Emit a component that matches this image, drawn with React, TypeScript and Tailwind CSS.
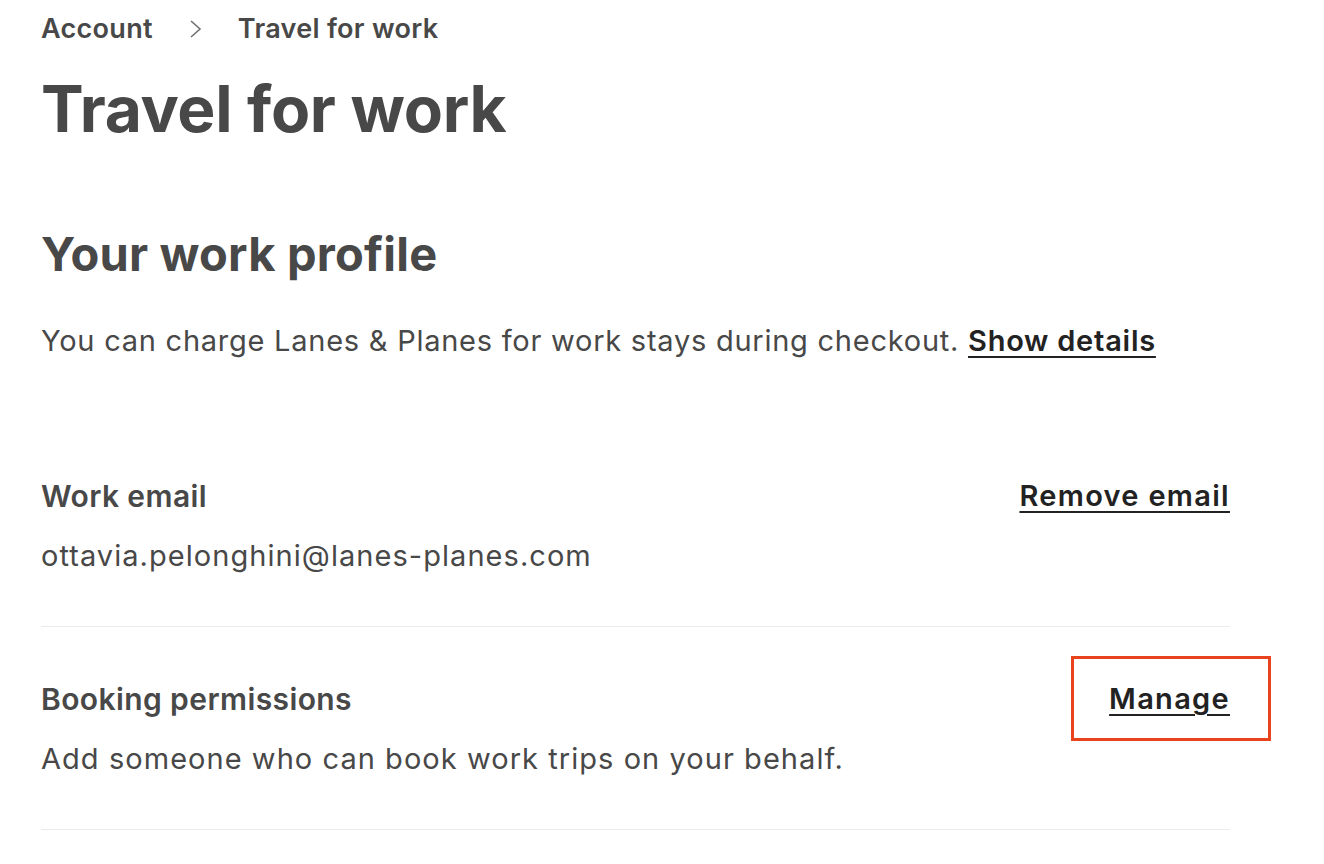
import React from 'react';

function Row({
  title,
  body,
  action,
  highlight,
  first,
}: {
  title: string;
  body: string;
  action: string;
  highlight?: boolean;
  first?: boolean;
}) {
  return (
    <div className={first ? 'border-b border-[#ebebeb] pt-[34px] pb-[52px]' : 'border-b border-[#ebebeb] pt-[54px] pb-[52px]'}>
      <div className="flex items-center justify-between">
        <div className="text-[30px] font-semibold leading-[36px] tracking-[0.4px] text-[#484848]">{title}</div>
        <div className="relative">
          <a href="#" className="text-[29px] font-semibold leading-[36px] tracking-[1.3px] text-[#222222] underline underline-offset-[5px] decoration-2">
            {action}
          </a>
          {highlight && (
            <div className="pointer-events-none absolute -left-[38px] -right-[41px] -top-[25px] -bottom-[24px] border-[3px] border-[#e8431c]" />
          )}
        </div>
      </div>
      <div className="mt-[24px] text-[29px] leading-[36px] tracking-[1.05px] text-[#484848]">{body}</div>
    </div>
  );
}

export default function App() {
  return (
    <div className="min-h-screen bg-white font-['Inter',sans-serif]">
      <div className="w-[1189px] pl-[41px] box-content">
        <nav className="flex items-center pt-[11px] text-[27px] font-semibold leading-[36px] tracking-[0.3px] text-[#484848]">
          <span>Account</span>
          <svg className="ml-[36px] mr-[35px] h-[24px] w-[14px] text-[#717171]" viewBox="0 0 14 24" fill="none" stroke="currentColor" strokeWidth="1.6">
            <path d="M2 4l9 8-9 8" />
          </svg>
          <span>Travel for work</span>
        </nav>

        <h1 className="mt-[26px] text-[64px] font-bold leading-[72px] tracking-[-0.3px] text-[#484848]">Travel for work</h1>

        <h2 className="mt-[83px] text-[47px] font-bold leading-[52px] tracking-[0.2px] text-[#484848]">Your work profile</h2>

        <p className="mt-[43px] text-[29px] leading-[36px] tracking-[0.75px] text-[#484848]">
          You can charge Lanes &amp; Planes for work stays during checkout.{' '}
          <a href="#" className="font-semibold text-[#222222] underline underline-offset-[5px] decoration-2">
            Show details
          </a>
        </p>

        <div className="mt-[85px]">
          <Row first title="Work email" body="ottavia.pelonghini@lanes-planes.com" action="Remove email" />
          <Row
            title="Booking permissions"
            body="Add someone who can book work trips on your behalf."
            action="Manage"
            highlight
          />
        </div>
      </div>
    </div>
  );
}
